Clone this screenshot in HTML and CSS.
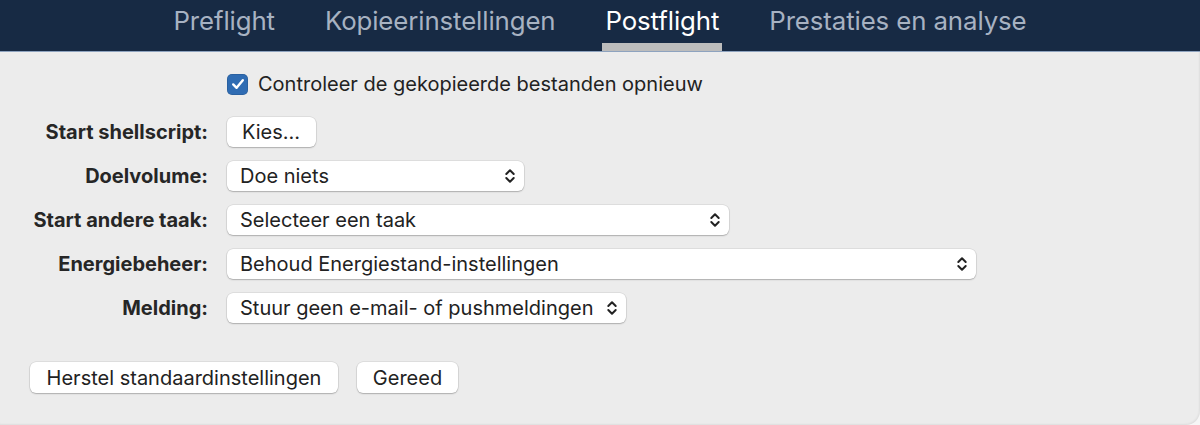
FILE: index.html
```html
<!DOCTYPE html>
<html lang="nl">
<head>
<meta charset="utf-8">
<link rel="stylesheet" href="styles.css">
</head>
<body>
<div class="window">
  <header class="tabbar">
    <div class="tab">Preflight</div>
    <div class="tab">Kopieerinstellingen</div>
    <div class="tab active">Postflight</div>
    <div class="tab">Prestaties en analyse</div>
  </header>
  <main class="content">
    <div class="form">
      <div class="label"></div>
      <label class="check">
        <span class="box"><svg viewBox="0 0 20 20" width="20" height="20"><path d="M5.2 10.4 L8.6 13.8 L14.8 6.2" fill="none" stroke="#fff" stroke-width="2.4" stroke-linecap="round" stroke-linejoin="round"/></svg></span>
        <span>Controleer de gekopieerde bestanden opnieuw</span>
      </label>

      <div class="label">Start shellscript:</div>
      <div class="ctrl"><button class="btn kies">Kies…</button></div>

      <div class="label">Doelvolume:</div>
      <div class="ctrl"><div class="popup w1"><span>Doe niets</span><svg class="chev" viewBox="0 0 12 18" width="12" height="18"><path d="M2.3 7 L6 3.3 L9.7 7 M2.3 11 L6 14.7 L9.7 11" fill="none" stroke="#222" stroke-width="2" stroke-linecap="round" stroke-linejoin="round"/></svg></div></div>

      <div class="label">Start andere taak:</div>
      <div class="ctrl"><div class="popup w2"><span>Selecteer een taak</span><svg class="chev" viewBox="0 0 12 18" width="12" height="18"><path d="M2.3 7 L6 3.3 L9.7 7 M2.3 11 L6 14.7 L9.7 11" fill="none" stroke="#222" stroke-width="2" stroke-linecap="round" stroke-linejoin="round"/></svg></div></div>

      <div class="label">Energiebeheer:</div>
      <div class="ctrl"><div class="popup w3"><span>Behoud Energiestand-instellingen</span><svg class="chev" viewBox="0 0 12 18" width="12" height="18"><path d="M2.3 7 L6 3.3 L9.7 7 M2.3 11 L6 14.7 L9.7 11" fill="none" stroke="#222" stroke-width="2" stroke-linecap="round" stroke-linejoin="round"/></svg></div></div>

      <div class="label">Melding:</div>
      <div class="ctrl"><div class="popup w4"><span>Stuur geen e-mail- of pushmeldingen</span><svg class="chev" viewBox="0 0 12 18" width="12" height="18"><path d="M2.3 7 L6 3.3 L9.7 7 M2.3 11 L6 14.7 L9.7 11" fill="none" stroke="#222" stroke-width="2" stroke-linecap="round" stroke-linejoin="round"/></svg></div></div>
    </div>
    <div class="footer">
      <button class="btn herstel">Herstel standaardinstellingen</button>
      <button class="btn gereed">Gereed</button>
    </div>
  </main>
</div>
</body>
</html>
```

FILE: styles.css
```css
* { box-sizing: border-box; }
html, body { margin: 0; padding: 0; }
body {
  width: 1200px;
  height: 425px;
  background: #f6f6f6;
  font-family: Inter, "Noto Sans", "Liberation Sans", sans-serif;
  color: #222;
  overflow: hidden;
}
.window {
  width: 1200px;
  height: 425px;
  background: #ececec;
  border-bottom-right-radius: 14px;
  box-shadow: inset -1px -1px 2px rgba(0,0,0,0.06);
  overflow: hidden;
}
.tabbar {
  height: 52px;
  background: #172a44;
  border-bottom: 1px solid #8ea3bf;
  display: flex;
  justify-content: center;
  align-items: stretch;
  gap: 44px;
}
.tab {
  font-size: 25.8px;
  color: #a7b2c2;
  padding: 5px 3px 0;
  letter-spacing: -0.1px;
  border-bottom: 8px solid transparent;
}
.tab.active {
  color: #ffffff;
  border-bottom-color: #bcbcbc;
}
.content {
  padding-top: 17px;
}
.form {
  display: grid;
  grid-template-columns: 208px 1fr;
  column-gap: 19px;
  row-gap: 14px;
  align-items: center;
}
.label {
  text-align: right;
  font-weight: 700;
  font-size: 20px;
  color: #262626;
}
.check {
  display: flex;
  align-items: center;
  gap: 10px;
  height: 30px;
  font-size: 20px;
  margin-bottom: 4px;
}
.box {
  width: 21px;
  height: 21px;
  border-radius: 5px;
  background: #2f6cb3;
  display: flex;
  align-items: center;
  justify-content: center;
  box-shadow: inset 0 0 0 0.5px rgba(0,0,0,0.2);
}
.ctrl { display: flex; height: 30px; }
.btn, .popup {
  background: #fff;
  border: none;
  border-radius: 6px;
  box-shadow: 0 0 0 0.5px rgba(0,0,0,0.12), 0 1px 1.5px rgba(0,0,0,0.22);
  font-family: inherit;
  font-size: 20px;
  color: #222;
  height: 30px;
  padding: 0 13px;
}
.popup {
  display: flex;
  align-items: center;
  justify-content: space-between;
  padding: 0 8px 0 13px;
}
.chev { flex: none; }
.kies { width: 89px; text-align: left; padding-left: 15px; }
.w1 { width: 297px; }
.w2 { width: 502px; }
.w3 { width: 749px; }
.w4 { width: 399px; }
.footer {
  display: flex;
  gap: 19px;
  padding-left: 30px;
  margin-top: 39px;
}
.footer .btn { height: 31px; }
.herstel { width: 308px; }
.gereed { width: 101px; }
```
